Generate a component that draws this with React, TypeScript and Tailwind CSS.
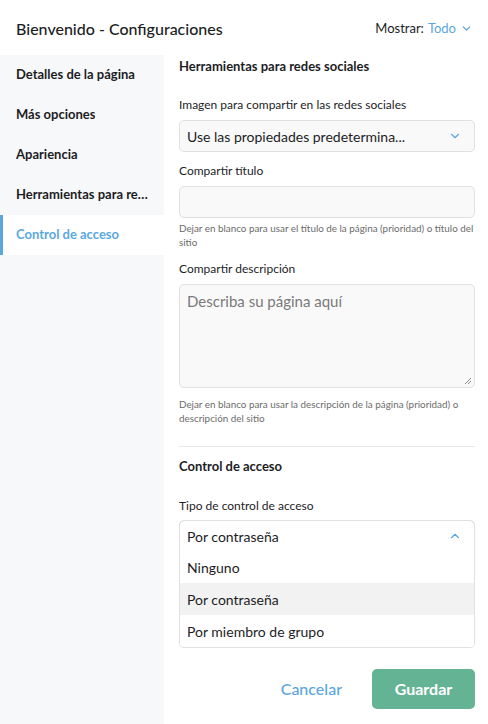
import React from 'react';
import { ChevronDown, ChevronUp } from 'lucide-react';
import clsx from 'clsx';

const navItems = [
  'Detalles de la página',
  'Más opciones',
  'Apariencia',
  'Herramientas para redes sociales',
  'Control de acceso',
];

const options = ['Ninguno', 'Por contraseña', 'Por miembro de grupo'];

export default function App() {
  const active = 'Control de acceso';

  return (
    <div className="w-[488px] h-[724px] bg-white text-[#1d1d1f] overflow-hidden flex flex-col" style={{ fontFamily: 'Lato, "Open Sans", sans-serif' }}>
      <header className="h-[55px] shrink-0 flex items-center justify-between pl-4 pr-[15px] pt-[2px]">
        <h1 className="text-[16px] font-medium">Bienvenido - Configuraciones</h1>
        <div className="flex items-center text-[13px]">
          <span>Mostrar:</span>
          <span className="ml-1 text-[#5aa7e0]">Todo</span>
          <ChevronDown className="ml-1 h-[13px] w-[13px] text-[#5aa7e0]" strokeWidth={2.5} />
        </div>
      </header>

      <div className="flex flex-1 min-h-0">
        <nav className="w-[164px] shrink-0 bg-[#f7f8fa]">
          {navItems.map((item) => (
            <div
              key={item}
              className={clsx(
                'h-10 flex items-center pl-[13px] pr-[15px] text-[13px] font-bold border-l-[3px]',
                item === active ? 'bg-white text-[#5aa7e0] border-[#5aa7e0]' : 'border-transparent'
              )}
            >
              <span className="truncate">{item}</span>
            </div>
          ))}
        </nav>

        <main className="flex-1 pl-[15px] pr-[13px] text-[12px]">
          <h2 className="mt-[2px] h-5 flex items-center text-[13px] font-bold">Herramientas para redes sociales</h2>

          <label className="block mt-[18px] h-5 leading-5">Imagen para compartir en las redes sociales</label>
          <div className="mt-[5px] h-8 rounded-[5px] border border-[#e1e1e1] bg-[#f9f9f9] flex items-center justify-between pl-[7px] pr-[12px] text-[14px]">
            <span>Use las propiedades predetermina...</span>
            <ChevronDown className="h-[14px] w-[14px] text-[#5aa7e0]" strokeWidth={2} />
          </div>

          <label className="block mt-[9px] h-5 leading-5">Compartir título</label>
          <div className="mt-[5px] h-8 rounded-[5px] border border-[#e1e1e1] bg-[#f9f9f9]" />
          <p className="mt-[3px] text-[9.85px] leading-[14px] text-[#6b6b6b]">
            Dejar en blanco para usar el título de la página (prioridad) o título del sitio
          </p>

          <label className="block mt-[10px] h-5 leading-5">Compartir descripción</label>
          <div className="relative mt-[5px] h-[104px] rounded-[5px] border border-[#e1e1e1] bg-[#f9f9f9] px-[7px] pt-[5px] text-[15px] text-[#7a7a7a]">
            Describa su página aquí
            <svg className="absolute right-[2px] bottom-[2px]" width="8" height="8" viewBox="0 0 8 8">
              <path d="M7 1 1 7M7 4 4 7" stroke="#8a8a8a" strokeWidth="1" />
            </svg>
          </div>
          <p className="mt-[9px] text-[9.85px] leading-[14px] text-[#6b6b6b]">
            Dejar en blanco para usar la descripción de la página (prioridad) o descripción del sitio
          </p>

          <div className="mt-[21px] border-t border-[#e8e8e8]" />

          <h2 className="mt-[10px] h-5 flex items-center text-[13px] font-bold">Control de acceso</h2>

          <label className="block mt-[19px] h-5 leading-5">Tipo de control de acceso</label>
          <div className="mt-[4px] rounded-[5px] border border-[#e1e1e1] overflow-hidden text-[14px]">
            <div className="h-8 -m-px rounded-t-[5px] border border-[#5aa7e0] bg-white flex items-center justify-between pl-[7px] pr-[12px]">
              <span>Por contraseña</span>
              <ChevronUp className="h-[14px] w-[14px] text-[#5aa7e0]" strokeWidth={2} />
            </div>
            {options.map((o) => (
              <div
                key={o}
                className={clsx('h-8 flex items-center px-[7px]', o === 'Por contraseña' ? 'bg-[#f2f2f2]' : 'bg-white')}
              >
                {o}
              </div>
            ))}
          </div>

          <div className="mt-[21px] flex items-center justify-end">
            <button className="text-[16px] font-medium text-[#5aa7e0] mr-[30px]">Cancelar</button>
            <button className="h-10 w-[103px] rounded-[5px] bg-[#64b395] text-white text-[16px] font-bold">Guardar</button>
          </div>
        </main>
      </div>
    </div>
  );
}
